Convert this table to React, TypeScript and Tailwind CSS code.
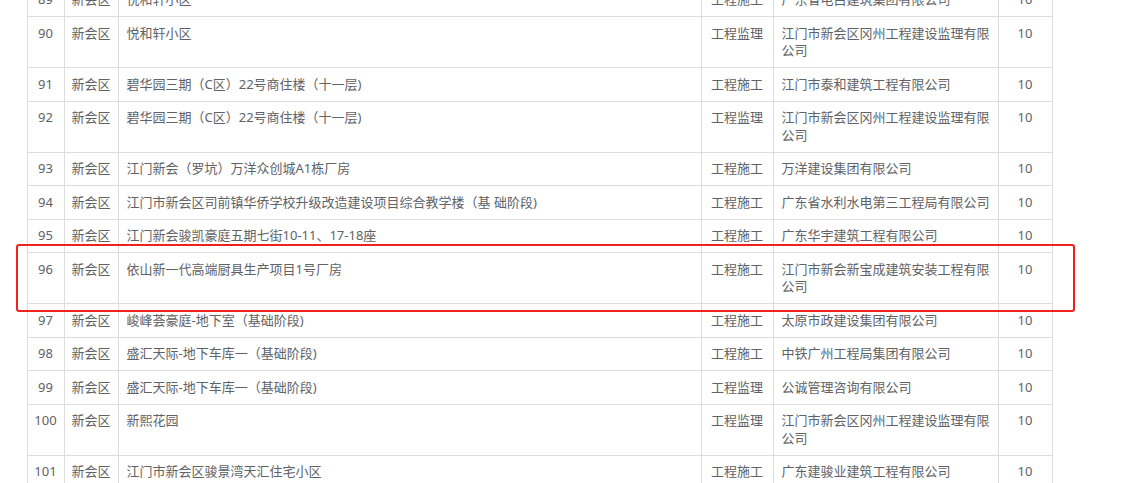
type Row = {
  no: number;
  district: string;
  project: string;
  kind: string;
  company: string;
  score: number;
};

const rows: Row[] = [
  { no: 89, district: "新会区", project: "悦和轩小区", kind: "工程施工", company: "广东省电白建筑集团有限公司", score: 10 },
  { no: 90, district: "新会区", project: "悦和轩小区", kind: "工程监理", company: "江门市新会区冈州工程建设监理有限公司", score: 10 },
  { no: 91, district: "新会区", project: "碧华园三期（C区）22号商住楼（十一层)", kind: "工程施工", company: "江门市泰和建筑工程有限公司", score: 10 },
  { no: 92, district: "新会区", project: "碧华园三期（C区）22号商住楼（十一层)", kind: "工程监理", company: "江门市新会区冈州工程建设监理有限公司", score: 10 },
  { no: 93, district: "新会区", project: "江门新会（罗坑）万洋众创城A1栋厂房", kind: "工程施工", company: "万洋建设集团有限公司", score: 10 },
  { no: 94, district: "新会区", project: "江门市新会区司前镇华侨学校升级改造建设项目综合教学楼（基 础阶段)", kind: "工程施工", company: "广东省水利水电第三工程局有限公司", score: 10 },
  { no: 95, district: "新会区", project: "江门新会骏凯豪庭五期七街10-11、17-18座", kind: "工程施工", company: "广东华宇建筑工程有限公司", score: 10 },
  { no: 96, district: "新会区", project: "依山新一代高端厨具生产项目1号厂房", kind: "工程施工", company: "江门市新会新宝成建筑安装工程有限公司", score: 10 },
  { no: 97, district: "新会区", project: "峻峰荟豪庭-地下室（基础阶段)", kind: "工程施工", company: "太原市政建设集团有限公司", score: 10 },
  { no: 98, district: "新会区", project: "盛汇天际-地下车库一（基础阶段)", kind: "工程施工", company: "中铁广州工程局集团有限公司", score: 10 },
  { no: 99, district: "新会区", project: "盛汇天际-地下车库一（基础阶段)", kind: "工程监理", company: "公诚管理咨询有限公司", score: 10 },
  { no: 100, district: "新会区", project: "新熙花园", kind: "工程监理", company: "江门市新会区冈州工程建设监理有限公司", score: 10 },
  { no: 101, district: "新会区", project: "江门市新会区骏景湾天汇住宅小区", kind: "工程施工", company: "广东建骏业建筑工程有限公司", score: 10 },
];

const base = "border border-[#dcdcdc] py-[7.5px] align-top leading-[17.5px]";
const center = `${base} px-0 text-center whitespace-nowrap`;
const left = `${base} px-2 text-left`;

export default function App() {
  return (
    <div
      className="relative h-[483px] w-[1128px] overflow-hidden bg-white text-[13px] text-[#606266]"
      style={{ fontFamily: '"Noto Sans", "Noto Sans CJK SC", sans-serif' }}
    >
      <table className="-mt-[17.5px] ml-[26.5px] w-[1025px] table-fixed border-collapse">
        <colgroup>
          <col className="w-[37px]" />
          <col className="w-[54px]" />
          <col className="w-[583px]" />
          <col className="w-[72px]" />
          <col className="w-[225px]" />
          <col className="w-[54px]" />
        </colgroup>
        <tbody>
          {rows.map((r) => (
            <tr key={r.no}>
              <td className={center}>{r.no}</td>
              <td className={center}>{r.district}</td>
              <td className={left}>{r.project}</td>
              <td className={center}>{r.kind}</td>
              <td className={left}>{r.company}</td>
              <td className={center}>{r.score}</td>
            </tr>
          ))}
        </tbody>
      </table>

      {/* red annotation box around row 96 */}
      <div className="pointer-events-none absolute left-[16px] top-[244px] h-[68px] w-[1059px] rounded-[3px] border-2 border-[#f0201a]" />
    </div>
  );
}
